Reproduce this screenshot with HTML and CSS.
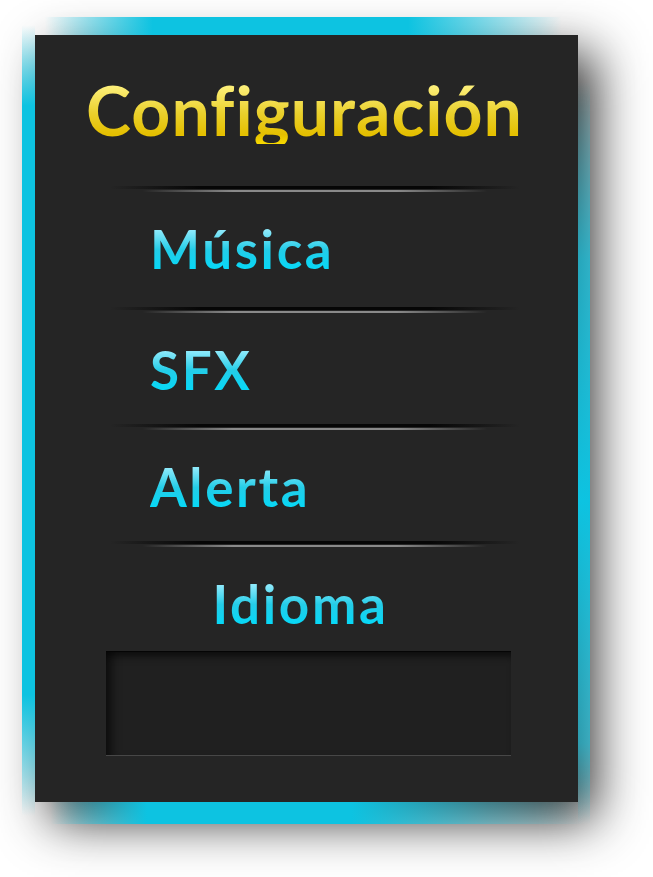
FILE: index.html
```html
<!DOCTYPE html>
<html lang="es">
<head>
<meta charset="utf-8">
<title>Configuración</title>
<link rel="stylesheet" href="styles.css">
</head>
<body>
<div class="stage">
  <div class="frame"></div>
  <section class="panel">
    <h1 class="title">Configuración</h1>
    <div class="divider divider-first"></div>
    <div class="label label-first">Música</div>
    <div class="divider"></div>
    <div class="label">SFX</div>
    <div class="divider"></div>
    <div class="label">Alerta</div>
    <div class="divider"></div>
    <div class="label label-center">Idioma</div>
    <div class="select-box"></div>
  </section>
</div>
</body>
</html>
```

FILE: styles.css
```css
html, body {
  margin: 0;
  padding: 0;
  background: #ffffff;
}

body {
  width: 653px;
  height: 877px;
  overflow: hidden;
  font-family: Lato, "Open Sans", sans-serif;
}

.stage {
  position: relative;
  width: 543px;
  height: 767px;
  margin: 35px 0 0 35px;
}

/* drop shadow layer, sits under the cyan frame */
.stage::before {
  content: "";
  position: absolute;
  inset: 0;
  box-shadow: 16px 18px 48px rgba(0, 0, 0, 0.85);
}

.frame {
  position: absolute;
  left: -13px;
  top: -18px;
  right: -12px;
  bottom: -22px;
  background:
    linear-gradient(to right, rgba(13,195,225,0) 4%, #0dc3e1 23%, #0dc3e1 68%, rgba(13,195,225,0) 95%) top left / 100% 18px no-repeat,
    linear-gradient(to right, rgba(13,195,225,0) 5%, #0dc3e1 22%, #0dc3e1 58%, rgba(13,195,225,0.35) 82%, rgba(13,195,225,0) 99%) bottom left / 100% 22px no-repeat,
    linear-gradient(to bottom, rgba(13,195,225,0) 1%, #0dc3e1 11%, #0dc3e1 84%, rgba(13,195,225,0) 99%) top left / 13px 100% no-repeat,
    linear-gradient(to bottom, rgba(13,195,225,0) 8%, rgba(13,195,225,0.7) 30%, #0dc3e1 60%, rgba(13,195,225,0.6) 90%, rgba(13,195,225,0) 100%) top right / 12px 100% no-repeat;
}

.panel {
  position: relative;
  box-sizing: border-box;
  width: 543px;
  height: 767px;
  background: #252525;
  padding-top: 41px;
  display: flex;
  flex-direction: column;
}

.title {
  margin: 0;
  padding-right: 4px;
  font-size: 68px;
  line-height: 68px;
  font-weight: 700;
  text-align: center;
  letter-spacing: 1px;
  background: linear-gradient(to bottom, #fdf07c 14%, #ead02c 55%, #e4bf00 86%, #f8da00 100%);
  -webkit-background-clip: text;
  background-clip: text;
  color: transparent;
}

.divider {
  width: 410px;
  height: 7px;
  margin: 0 0 29px 75px;
  background:
    linear-gradient(to right, rgba(0,0,0,0) 0%, #060606 22%, #060606 78%, rgba(0,0,0,0) 100%) top left / 100% 3px no-repeat,
    linear-gradient(to right, rgba(140,140,140,0) 8%, #8a8a8a 30%, #8a8a8a 70%, rgba(140,140,140,0) 92%) left 4px / 100% 2px no-repeat;
}

.divider-first {
  margin-top: 42px;
}

.label {
  margin: 0 0 28px 115px;
  font-size: 53px;
  line-height: 53px;
  font-weight: 700;
  letter-spacing: 2.6px;
  background: linear-gradient(to bottom, #8ce9fb 16%, #24cde8 52%, #06d8f7 90%);
  -webkit-background-clip: text;
  background-clip: text;
  color: transparent;
  align-self: flex-start;
}

.label-first {
  margin-bottom: 32px;
}

.label-center {
  margin: 0 12px 21px 0;
  align-self: center;
}

.select-box {
  box-sizing: border-box;
  width: 405px;
  height: 105px;
  margin: 0 0 0 71px;
  background: #202020;
  border-top: 1px solid #050505;
  border-bottom: 1px solid #474747;
  box-shadow:
    inset 12px 0 10px -6px rgba(0, 0, 0, 0.55),
    inset 0 9px 9px -5px rgba(0, 0, 0, 0.6);
}
```
